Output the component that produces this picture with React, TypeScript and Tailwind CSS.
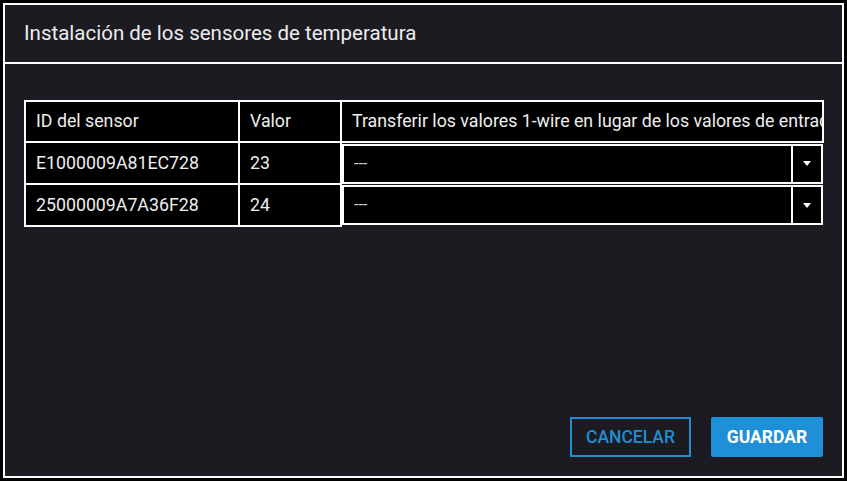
import React from 'react';

const font = { fontFamily: 'Roboto, "Noto Sans", sans-serif' };

const rows = [
  { id: 'E1000009A81EC728', value: '23' },
  { id: '25000009A7A36F28', value: '24' },
];

const SelectBox: React.FC = () => (
  <div className="flex h-[40px] w-full items-stretch border-2 border-white bg-black">
    <div className="flex flex-1 items-center pl-[10px] text-[16px] text-[#d4d4d4]">---</div>
    <div className="flex w-[30px] items-center justify-center border-l-2 border-white">
      <svg width="8" height="5" viewBox="0 0 8 5">
        <path d="M0 0 L8 0 L4 5 Z" fill="#ffffff" />
      </svg>
    </div>
  </div>
);

export default function App() {
  return (
    <div className="h-[481px] w-[847px] bg-black p-[3px]" style={font}>
      <div className="flex h-full flex-col border-2 border-white bg-[#1b1b21]">
        <div className="flex h-[59px] items-center border-b-2 border-white px-[19px]">
          <h1 className="text-[20.5px] font-normal text-[#ececec]">
            Instalación de los sensores de temperatura
          </h1>
        </div>

        <div className="flex flex-1 flex-col px-[19px] pt-[36px] pb-[19px]">
          <table className="w-[798px] table-fixed border-collapse text-[17.75px] text-[#eeeeee]">
            <colgroup>
              <col className="w-[214px]" />
              <col className="w-[102px]" />
              <col className="w-[482px]" />
            </colgroup>
            <thead>
              <tr className="h-[41px]">
                <th className="border-2 border-white bg-black pl-[10px] text-left font-normal">ID del sensor</th>
                <th className="border-2 border-white bg-black pl-[10px] text-left font-normal">Valor</th>
                <th className="overflow-hidden whitespace-nowrap border-2 border-white bg-black pl-[10px] text-left font-normal">
                  Transferir los valores 1-wire en lugar de los valores de entrada
                </th>
              </tr>
            </thead>
            <tbody>
              {rows.map((r) => (
                <tr key={r.id} className="h-[42px]">
                  <td className="border-2 border-white bg-black pl-[10px]">{r.id}</td>
                  <td className="border-2 border-white bg-black pl-[10px]">{r.value}</td>
                  <td className="p-0">
                    <SelectBox />
                  </td>
                </tr>
              ))}
            </tbody>
          </table>

          <div className="mt-auto flex justify-end gap-[20px]">
            <button className="h-[40px] w-[121px] border-2 border-[#1f8fd4] text-[17.5px] font-medium text-[#1f8fd4]">
              CANCELAR
            </button>
            <button className="h-[40px] w-[112px] rounded-[2px] bg-[#1f8fd8] text-[17.5px] font-bold text-white">
              GUARDAR
            </button>
          </div>
        </div>
      </div>
    </div>
  );
}
